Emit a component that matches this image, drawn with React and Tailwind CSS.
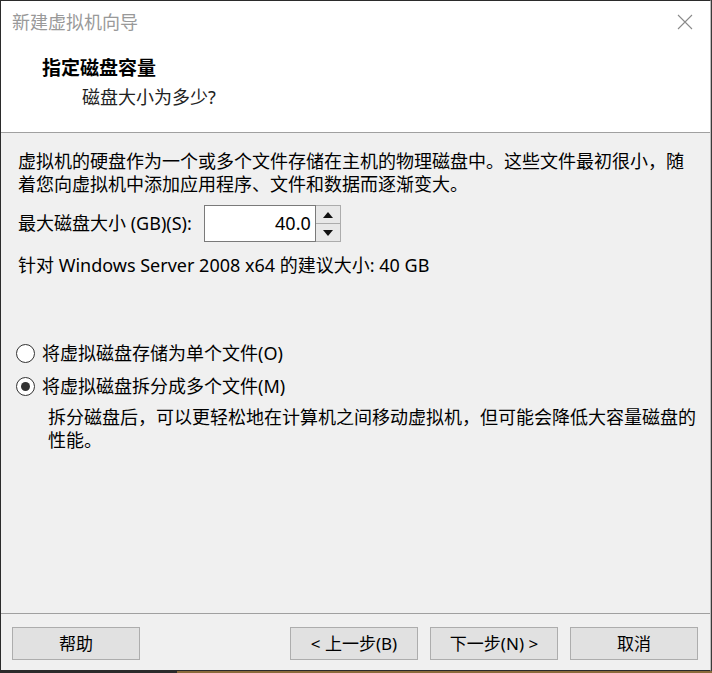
import React from "react";

const font = { fontFamily: '"Noto Sans", "Noto Sans CJK SC", sans-serif' };

function Radio({ checked, label }) {
  return (
    <div className="flex items-center h-[23px] pl-[15px]">
      <span className="w-[19px] h-[19px] rounded-full border border-[#333333] bg-white flex items-center justify-center">
        {checked && <span className="w-[9px] h-[9px] rounded-full bg-[#333333]" />}
      </span>
      <span className="ml-[7px] text-[18px] leading-[23px] text-black">{label}</span>
    </div>
  );
}

function Btn({ children }) {
  return (
    <div className="h-[33px] w-[128px] border border-[#adadad] bg-[#e1e1e1] flex items-center justify-center text-[17px] text-black">
      {children}
    </div>
  );
}

export default function App() {
  return (
    <div className="w-[712px] h-[673px] bg-[#3a3a3a] flex flex-col overflow-hidden" style={font}>
      <div className="w-[711px] h-[671px] border-l border-t border-b border-l-[#2b2b2b] border-t-[#2b2b2b] border-b-[#2b2b2b] border-r border-r-[#bdbdbd] bg-[#f0f0f0] flex flex-col">
        {/* header */}
        <div className="bg-white border-b border-[#a0a0a0] h-[132px] flex flex-col">
          <div className="h-[42px] flex items-center justify-between pl-[11px] pr-[16px]">
            <span className="text-[18px] text-[#999999] leading-[24px]">新建虚拟机向导</span>
            <svg width="16" height="16" viewBox="0 0 16 16" className="mr-[1px]">
              <path d="M1 1 L15 15 M15 1 L1 15" stroke="#8a8a8a" strokeWidth="1.1" fill="none" />
            </svg>
          </div>
          <div className="mt-[13px] pl-[41px] text-[19px] leading-[24px] font-bold text-black">指定磁盘容量</div>
          <div className="mt-[5px] pl-[81px] text-[18px] leading-[24px] text-[#222222]">磁盘大小为多少?</div>
        </div>

        {/* body */}
        <div className="flex-1 flex flex-col">
          <div className="flex flex-col pl-[17px] pr-[12px]">
            <p className="mt-[17px] text-[18px] leading-[23px] text-black">
              虚拟机的硬盘作为一个或多个文件存储在主机的物理磁盘中。这些文件最初很小，随着您向虚拟机中添加应用程序、文件和数据而逐渐变大。
            </p>
            <div className="mt-[9px] flex items-center">
              <span className="text-[18px] leading-[23px] text-black">最大磁盘大小 (GB)(S):</span>
              <div className="ml-[12px] flex h-[37px]">
                <div className="w-[112px] h-full bg-white border border-[#7a7a7a] flex items-center justify-end pr-[4px] text-[18px] text-black">
                  40.0
                </div>
                <div className="w-[25px] h-full flex flex-col border-t border-r border-b border-[#acacac] bg-[#e8e8e8]">
                  <div className="flex-1 flex items-center justify-center border-b border-[#acacac]">
                    <svg width="10" height="6" viewBox="0 0 10 6"><path d="M0 6 L5 0 L10 6 Z" fill="#111" /></svg>
                  </div>
                  <div className="flex-1 flex items-center justify-center">
                    <svg width="10" height="6" viewBox="0 0 10 6"><path d="M0 0 L10 0 L5 6 Z" fill="#111" /></svg>
                  </div>
                </div>
              </div>
            </div>
            <p className="mt-[12px] text-[18px] leading-[23px] text-black">
              针对 Windows Server 2008 x64 的建议大小: 40 GB
            </p>
          </div>

          <div className="mt-[65px] flex flex-col">
            <Radio label="将虚拟磁盘存储为单个文件(O)" />
            <div className="mt-[10px]">
              <Radio checked label="将虚拟磁盘拆分成多个文件(M)" />
            </div>
            <p className="mt-[8px] pl-[47px] pr-[14px] text-[18px] leading-[23px] text-black">
              拆分磁盘后，可以更轻松地在计算机之间移动虚拟机，但可能会降低大容量磁盘的性能。
            </p>
          </div>
        </div>

        {/* footer */}
        <div className="border-t border-[#a0a0a0] h-[57px] flex items-start pt-[13px] pl-[11px] pr-[12px]">
          <Btn>帮助</Btn>
          <div className="flex-1" />
          <div className="flex gap-[12px]">
            <Btn>&lt; 上一步(B)</Btn>
            <Btn>下一步(N) &gt;</Btn>
            <Btn>取消</Btn>
          </div>
        </div>
      </div>
      <div className="h-[2px] flex">
        <div className="w-[177px] bg-[#2b2b2b]" />
        <div className="flex-1 bg-[#8a6a3a]" />
      </div>
    </div>
  );
}
